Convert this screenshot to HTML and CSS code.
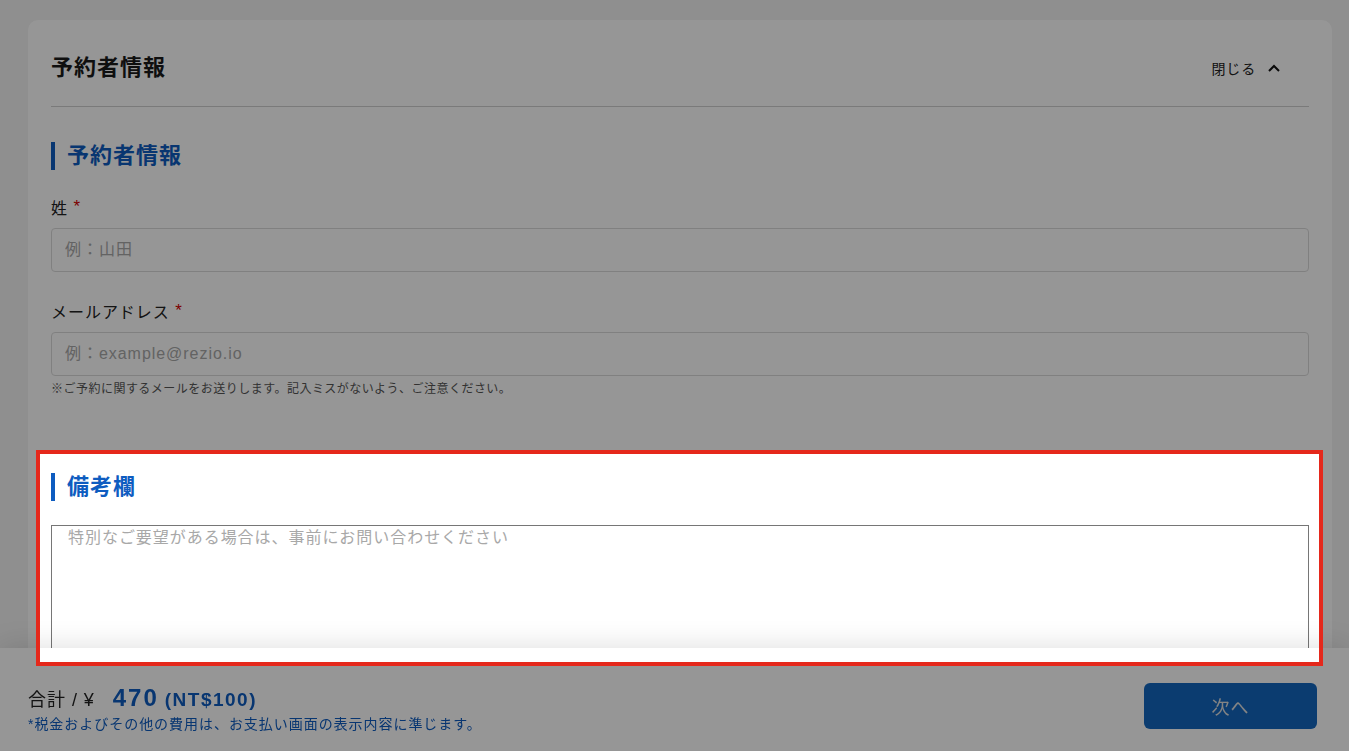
FILE: index.html
```html
<!DOCTYPE html>
<html lang="ja">
<head>
	<meta charset="utf-8" />
	<title>予約者情報</title>
	<link rel="stylesheet" href="styles.css">
</head>
<body>
	<div class="card">
		<div class="card-header">
			<h2 class="card-title">予約者情報</h2>
			<button class="toggle" type="button">閉じる
				<svg class="chevron" width="12" height="8" viewBox="0 0 12 8"><polyline points="1,7 6,2 11,7" fill="none" stroke="#111" stroke-width="2"/></svg>
			</button>
		</div>

		<div class="section">
			<h3 class="section-title">予約者情報</h3>
			<div class="field">
				<label class="field-label" for="lastName">姓 <span class="required">*</span></label>
				<input class="text-input" id="lastName" type="text" placeholder="例：山田">
			</div>
			<div class="field">
				<label class="field-label" for="email">メールアドレス <span class="required">*</span></label>
				<input class="text-input" id="email" type="text" placeholder="例：example@rezio.io">
				<p class="hint">※ご予約に関するメールをお送りします。記入ミスがないよう、ご注意ください。</p>
			</div>
		</div>

		<div class="section remarks">
			<h3 class="section-title">備考欄</h3>
			<textarea class="remarks-input" placeholder="特別なご要望がある場合は、事前にお問い合わせください"></textarea>
			<!-- tutorial highlight -->
			<div class="spotlight"></div>
		</div>
	</div>

	<div class="footer-bar">
		<div class="total">
			<p class="total-line">合計 / ¥ <span class="amount">470</span> <span class="amount-sub">(NT$100)</span></p>
			<p class="total-note">*税金およびその他の費用は、お支払い画面の表示内容に準じます。</p>
		</div>
		<button class="next-button" type="button">次へ</button>
	</div>
</body>
</html>
```

FILE: styles.css
```css
html {
	overflow: hidden;
	box-sizing: border-box;
	font-family: "Liberation Sans", "Noto Sans CJK JP", sans-serif;
	letter-spacing: 0.06em;
	color: #222;
}

*, *:before, *:after {
	box-sizing: inherit;
}

body {
	margin: 0;
	padding: 0;
	background-color: #f3f3f3;
	height: 751px;
}

h2, h3, p {
	margin: 0;
}

.card {
	margin: 20px 17px 0 28px;
	padding: 0 23px 102px;
	background-color: #fff;
	border-radius: 10px;
}

.card-header {
	display: flex;
	justify-content: space-between;
	align-items: center;
	padding: 28px 0 18px;
	border-bottom: 1px solid #cfcfcf;
}

.card-title {
	font-size: 22px;
	line-height: 40px;
	font-weight: bold;
	letter-spacing: 0.045em;
	color: #1a1a1a;
}

.toggle {
	display: flex;
	align-items: center;
	gap: 12px;
	margin-right: 29px;
	padding: 0;
	border: 0;
	background: none;
	font-family: inherit;
	font-size: 14px;
	letter-spacing: 0.06em;
	color: #222;
}

.section-title {
	font-size: 22px;
	line-height: 28px;
	font-weight: bold;
	letter-spacing: 0.045em;
	color: #0e5cc0;
	border-left: 4px solid #0e5cc0;
	padding-left: 12px;
}

.section {
	padding-top: 35px;
}

.field {
	margin-top: 25px;
}

.field + .field {
	margin-top: 27px;
}

.field-label {
	display: block;
	font-size: 16px;
	line-height: 24px;
}

.required {
	color: #d40000;
	font-size: 17px;
	vertical-align: 2px;
}

.text-input {
	display: block;
	width: 100%;
	height: 44px;
	margin-top: 7px;
	padding: 0 13px;
	border: 1px solid #dadada;
	border-radius: 4px;
	font-family: inherit;
	font-size: 16px;
	letter-spacing: 0.06em;
	background: #fff;
}

.text-input::placeholder, .remarks-input::placeholder {
	color: #a8a8a8;
}

.hint {
	margin-top: 4px;
	font-size: 12px;
	line-height: 18px;
	letter-spacing: 0.04em;
	color: #555;
}

.remarks {
	position: relative;
	margin-top: 67px;
	padding-top: 8px;
}

.remarks-input {
	display: block;
	width: 100%;
	height: 124px;
	margin-top: 24px;
	padding: 2px 16px;
	border: 1px solid #767676;
	border-radius: 0;
	resize: none;
	font-family: inherit;
	font-size: 16px;
	line-height: 20px;
	letter-spacing: 0.06em;
}

.spotlight {
	position: absolute;
	top: -15px;
	left: -15px;
	right: -14px;
	bottom: -17px;
	border: 4px solid #e5281b;
	box-shadow: 0 0 0 3000px rgba(0, 0, 0, 0.41);
	z-index: 10;
	pointer-events: none;
}

.footer-bar {
	position: fixed;
	left: 0;
	right: 0;
	bottom: 0;
	height: 103px;
	display: flex;
	justify-content: space-between;
	align-items: flex-start;
	padding: 35px 32px 0 28px;
	background-color: #fff;
	box-shadow: 0 0 28px rgba(0, 0, 0, 0.14);
	z-index: 5;
}

.total-line {
	margin-top: 1px;
	font-size: 18px;
	line-height: 28px;
}

.amount {
	margin-left: 12px;
	font-size: 24px;
	font-weight: bold;
	letter-spacing: 2px;
	color: #0e5cc0;
}

.amount-sub {
	font-size: 19px;
	font-weight: bold;
	letter-spacing: 1.5px;
	color: #0e5cc0;
}

.total-note {
	font-size: 14px;
	line-height: 20px;
	color: #0e5cc0;
}

.next-button {
	width: 173px;
	height: 46px;
	border: 0;
	border-radius: 6px;
	background-color: #1367bf;
	color: #e0e0e0;
	font-family: inherit;
	font-size: 18px;
	letter-spacing: 0.06em;
}
```
